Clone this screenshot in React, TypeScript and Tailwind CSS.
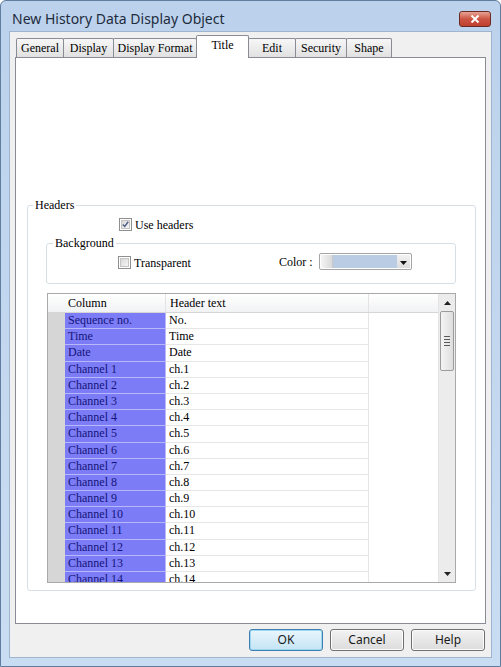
import { ReactNode } from "react"

const serif = "font-['Liberation_Serif','DejaVu_Serif',serif]"
const ui = { fontFamily: '"Noto Sans", "Open Sans", sans-serif' }

const tabs = [
  { label: "General", w: "w-[48px]" },
  { label: "Display", w: "w-[51px]" },
  { label: "Display Format", w: "w-[84px]" },
  { label: "Title", w: "w-[53px]", active: true },
  { label: "Edit", w: "w-[48px]" },
  { label: "Security", w: "w-[52px]" },
  { label: "Shape", w: "w-[46px]" },
]

const rows: string[][] = [
  ["Sequence no.", "No."],
  ["Time", "Time"],
  ["Date", "Date"],
  ...Array.from({ length: 14 }, (_, i) => [`Channel ${i + 1}`, `ch.${i + 1}`]),
]

const CheckBox = ({ checked }: { checked?: boolean }) => (
  <div className="w-[13px] h-[13px] border border-[#8e8f8f] bg-white p-[1px] flex-none">
    <div className="w-full h-full bg-gradient-to-br from-[#d8d8d8] to-[#f6f6f6] border border-[#c4c4c4] flex items-center justify-center">
      {checked && (
        <svg width="9" height="9" viewBox="0 0 9 9">
          <path d="M1 4.5 L3.5 7 L8 1" fill="none" stroke="#4a5f86" strokeWidth="1.8" />
        </svg>
      )}
    </div>
  </div>
)

const GroupLabel = ({ children, left }: { children: ReactNode; left: string }) => (
  <span className={`absolute -top-[8px] ${left} px-[2px] bg-white text-[12px] leading-[14px] text-black`}>
    {children}
  </span>
)

const Button = ({ label, primary }: { label: string; primary?: boolean }) => (
  <button
    className={`w-[74px] h-[22px] rounded-[3px] border text-[12px] text-[#1a1a1a] ${
      primary
        ? "border-[#3c7fb1] bg-gradient-to-b from-[#eaf6fd] to-[#c4e4f5] shadow-[inset_0_0_0_1px_#9fd7f3]"
        : "border-[#707070] bg-gradient-to-b from-[#f2f2f2] to-[#dcdcdc] shadow-[inset_0_0_0_1px_#fcfcfc]"
    }`}
    style={ui}
  >
    {label}
  </button>
)

export default function App() {
  return (
    <div className="w-[501px] h-[667px] border border-[#5f7e9f] rounded-t-[6px] bg-gradient-to-b from-[#bcd2ec] to-[#c9ddf2] flex flex-col px-[8px] pb-[8px] overflow-hidden">
      {/* title bar */}
      <div className="h-[30px] flex items-start pt-[9px] pl-[3px]">
        <span className="text-[14px] leading-[18px] text-[#1e2c3e] flex-1" style={ui}>
          New History Data Display Object
        </span>
        <div className="mt-[1px] mr-[1px] w-[32px] h-[16px] rounded-[3px] border border-[#6b2b22] bg-gradient-to-b from-[#e6a394] via-[#cc5443] to-[#c0402f] flex items-center justify-center">
          <svg width="10" height="8" viewBox="0 0 10 8">
            <path d="M1.5 0.5 L8.5 7.5 M8.5 0.5 L1.5 7.5" stroke="white" strokeWidth="2" />
          </svg>
        </div>
      </div>

      {/* client */}
      <div className={`flex-1 border border-[#9fb5cf] bg-[#f0f0f0] px-[5px] pt-[3px] pb-[6px] flex flex-col ${serif}`}>
        <div className="h-[22px] flex items-end pl-[1px]">
          {tabs.map((t, i) =>
            t.active ? (
              <div
                key={t.label}
                className={`${t.w} h-[23px] -mb-[1px] -ml-[1px] relative z-10 bg-white border border-b-0 border-[#898c95] rounded-t-[2px] flex justify-center pt-[2px] text-[12px] leading-[14px] text-black`}
              >
                {t.label}
              </div>
            ) : (
              <div
                key={t.label}
                className={`${t.w} h-[19px] ${i > 0 ? "-ml-[1px]" : ""} bg-gradient-to-b from-[#f7f7f7] to-[#e1e1e1] border border-b-0 border-[#898c95] rounded-t-[2px] flex items-center justify-center text-[12px] text-black whitespace-nowrap`}
              >
                {t.label}
              </div>
            )
          )}
        </div>

        <div className="h-[567px] border border-[#898c95] bg-white flex flex-col">
          {/* Headers group */}
          <div className="mt-[147px] ml-[11px] w-[449px] h-[386px] relative border border-[#d5dfe5] rounded-[3px]">
            <GroupLabel left="left-[5px]">Headers</GroupLabel>

            <div className="mt-[12px] ml-[91px] flex items-center gap-[3px] h-[13px]">
              <CheckBox checked />
              <span className="text-[12px] text-black">Use headers</span>
            </div>

            {/* Background group */}
            <div className="mt-[12px] ml-[18px] w-[410px] h-[41px] relative border border-[#d5dfe5] rounded-[3px]">
              <GroupLabel left="left-[6px]">Background</GroupLabel>
              <div className="mt-[9px] h-[17px] flex items-center">
                <div className="ml-[71px] w-[161px] flex items-center gap-[3px] pt-[2px]">
                  <CheckBox />
                  <span className="text-[12px] text-black">Transparent</span>
                </div>
                <span className="w-[40px] text-[12px] text-black">Color :</span>
                <div className="w-[93px] h-[17px] border border-[#a5a5a5] rounded-[2px] bg-white flex items-center p-[1px]">
                  <div className="w-[12px] h-full bg-gradient-to-r from-[#f4f4f4] to-[#dadada] border-r border-[#c8c8c8]" />
                  <div className="flex-1 h-full bg-[#b9cce4]" />
                  <div className="w-[13px] h-full bg-gradient-to-b from-[#f2f2f2] to-[#dcdcdc] flex items-end justify-center pb-[3px]">
                    <svg width="7" height="4" viewBox="0 0 7 4">
                      <path d="M0 0 H7 L3.5 4 Z" fill="#111" />
                    </svg>
                  </div>
                </div>
              </div>
            </div>

            {/* table */}
            <div className="mt-[9px] ml-[19px] w-[409px] h-[290px] border border-[#a9a9a9] flex bg-white">
              <div className="flex-1 overflow-hidden flex flex-col">
                <div className="h-[19px] flex-none flex border-b border-[#d5d5d5] bg-gradient-to-b from-white to-[#f1f2f4] text-[12px] text-black">
                  <div className="w-[118px] border-r border-[#e3e3e3] pl-[20px] leading-[18px]">Column</div>
                  <div className="w-[203px] border-r border-[#e3e3e3] pl-[4px] leading-[18px]">Header text</div>
                  <div className="flex-1" />
                </div>
                {rows.map(([a, b]) => (
                  <div key={a} className="h-[16.2px] flex-none flex text-[12px] leading-[15px]">
                    <div className="w-[17px] bg-[#d6d6d6] border-b border-[#d6d6d6]" />
                    <div className="w-[101px] bg-[#7c7cf6] border-b border-r border-[#b8b8f8] pl-[3px] text-[#14147a] whitespace-nowrap overflow-hidden">
                      {a}
                    </div>
                    <div className="w-[203px] border-b border-r border-[#e6e6e6] pl-[3px] text-black">{b}</div>
                    <div className="flex-1" />
                  </div>
                ))}
              </div>

              {/* scrollbar */}
              <div className="w-[17px] bg-[#ececec] border-l border-[#e4e4e4] flex flex-col">
                <div className="h-[17px] flex items-center justify-center">
                  <svg width="7" height="4" viewBox="0 0 7 4">
                    <path d="M0 4 H7 L3.5 0 Z" fill="#222" />
                  </svg>
                </div>
                <div className="mx-[1px] h-[60px] rounded-[2px] border border-[#9b9b9b] bg-gradient-to-r from-[#f4f4f4] to-[#dedede] flex flex-col items-center justify-center gap-[2px]">
                  <div className="w-[6px] h-[1px] bg-[#5a5a5a]" />
                  <div className="w-[6px] h-[1px] bg-[#5a5a5a]" />
                  <div className="w-[6px] h-[1px] bg-[#5a5a5a]" />
                  <div className="w-[6px] h-[1px] bg-[#5a5a5a]" />
                </div>
                <div className="flex-1" />
                <div className="h-[17px] flex items-center justify-center">
                  <svg width="7" height="4" viewBox="0 0 7 4">
                    <path d="M0 0 H7 L3.5 4 Z" fill="#222" />
                  </svg>
                </div>
              </div>
            </div>
          </div>
        </div>

        <div className="mt-[5px] flex justify-end gap-[7px] pr-[1px]">
          <Button label="OK" primary />
          <Button label="Cancel" />
          <Button label="Help" />
        </div>
      </div>
    </div>
  )
}
